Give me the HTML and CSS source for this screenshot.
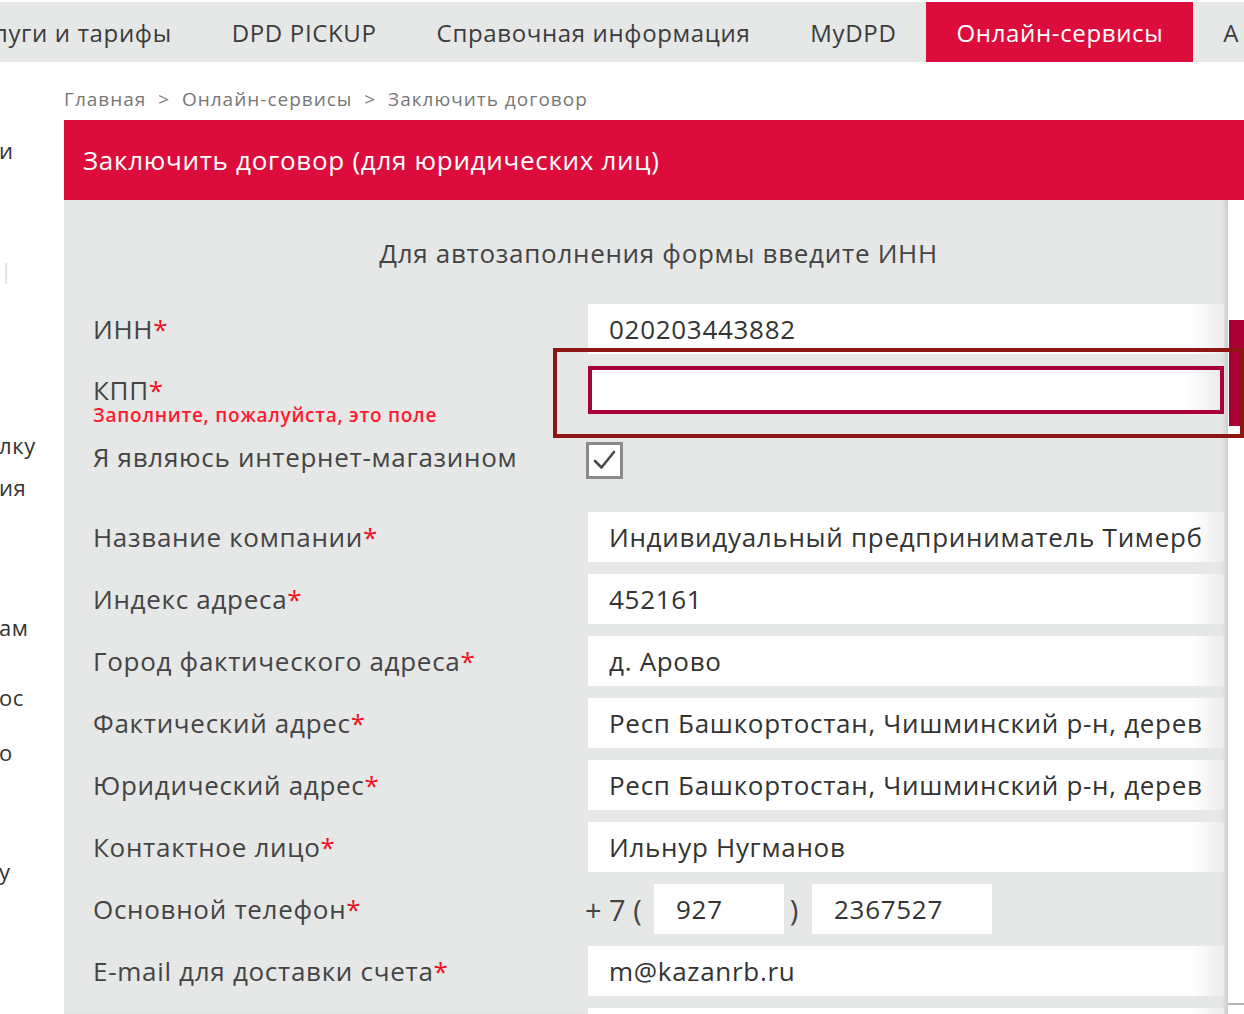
FILE: index.html
```html
<!DOCTYPE html>
<html lang="ru">
<head>
<meta charset="utf-8">
<title>Заключить договор</title>
<link rel="stylesheet" href="styles.css">
</head>
<body>
<nav class="topnav">
  <div class="navlist">
    <a class="navitem first" href="#">луги и тарифы</a>
    <a class="navitem" href="#">DPD PICKUP</a>
    <a class="navitem" href="#">Справочная информация</a>
    <a class="navitem" href="#">MyDPD</a>
    <a class="navitem active" href="#">Онлайн-сервисы</a>
    <a class="navitem" href="#">А</a>
  </div>
</nav>
<div class="main">
  <aside class="sidebar">
    <span class="side-item">и</span>
    <span class="side-item faint">|</span>
    <span class="side-item">лку</span>
    <span class="side-item">ия</span>
    <span class="side-item">ам</span>
    <span class="side-item">ос</span>
    <span class="side-item">о</span>
    <span class="side-item">у</span>
  </aside>
  <section class="content">
    <div class="breadcrumb">Главная&nbsp; &gt; &nbsp;Онлайн-сервисы&nbsp; &gt; &nbsp;Заключить договор</div>
    <h1 class="title">Заключить договор (для юридических лиц)</h1>
    <div class="panel">
      <p class="hint">Для автозаполнения формы введите ИНН</p>
      <div class="form">
        <div class="label">ИНН<span class="req">*</span></div>
        <div class="field"><div class="input"><span class="val">020203443882</span></div></div>

        <div class="label label-err"><div class="lbl-line">КПП<span class="req">*</span></div><div class="err">Заполните, пожалуйста, это поле</div></div>
        <div class="field"><div class="input invalid"><span class="val"></span></div></div>

        <div class="label label-top">Я являюсь интернет-магазином</div>
        <div class="field field-top">
          <div class="checkbox">
            <svg width="31" height="31" viewBox="0 0 31 31"><path d="M6 16 L12.5 22.5 L25 7" fill="none" stroke="#4a4a4a" stroke-width="2.6" stroke-linecap="round" stroke-linejoin="round"/></svg>
          </div>
        </div>

        <div class="label">Название компании<span class="req">*</span></div>
        <div class="field"><div class="input"><span class="val">Индивидуальный предприниматель Тимербулатов</span></div></div>

        <div class="label">Индекс адреса<span class="req">*</span></div>
        <div class="field"><div class="input"><span class="val">452161</span></div></div>

        <div class="label">Город фактического адреса<span class="req">*</span></div>
        <div class="field"><div class="input"><span class="val">д. Арово</span></div></div>

        <div class="label">Фактический адрес<span class="req">*</span></div>
        <div class="field"><div class="input"><span class="val">Респ Башкортостан, Чишминский р-н, деревня Арово</span></div></div>

        <div class="label">Юридический адрес<span class="req">*</span></div>
        <div class="field"><div class="input"><span class="val">Респ Башкортостан, Чишминский р-н, деревня Арово</span></div></div>

        <div class="label">Контактное лицо<span class="req">*</span></div>
        <div class="field"><div class="input"><span class="val">Ильнур Нугманов</span></div></div>

        <div class="label">Основной телефон<span class="req">*</span></div>
        <div class="field phone">
          <span class="prefix">+ 7 (</span>
          <div class="input code"><span class="val">927</span></div>
          <span class="paren">)</span>
          <div class="input number"><span class="val">2367527</span></div>
        </div>

        <div class="label">E-mail для доставки счета<span class="req">*</span></div>
        <div class="field"><div class="input"><span class="val">m@kazanrb.ru</span></div></div>

        <div class="label"></div>
        <div class="field"><div class="input"><span class="val"></span></div></div>
      </div>
    </div>
  </section>
</div>
<div class="side-tab"></div>
<div class="edge-line"></div>
<div class="annotation"></div>
</body>
</html>
```
FILE: styles.css
```css
html, body {
  margin: 0;
  padding: 0;
}
body {
  width: 1244px;
  height: 1014px;
  overflow: hidden;
  position: relative;
  background: #fff;
  font-family: "Open Sans", "Noto Sans", sans-serif;
  color: #444;
}

/* top navigation */
.topnav {
  margin-top: 2px;
  height: 60px;
  background: #e6e7e7;
  overflow: hidden;
}
.navlist {
  display: flex;
  height: 100%;
  margin-left: -6px;
  white-space: nowrap;
}
.navitem {
  display: flex;
  align-items: center;
  padding: 0 30px;
  font-size: 24px;
  letter-spacing: 0.65px;
  color: #3c3c3c;
  text-decoration: none;
}
.navitem.first {
  padding-left: 0;
}
.navitem.active {
  background: #dc0d3c;
  color: #fff;
}

/* main */
.main {
  display: flex;
}
.sidebar {
  width: 64px;
  flex: none;
  display: flex;
  flex-direction: column;
  font-size: 22px;
  letter-spacing: 0.6px;
  color: #333;
  overflow: hidden;
}
.side-item {
  display: block;
  height: 30px;
  line-height: 30px;
  margin-left: -1px;
}
.side-item:nth-child(1) { margin-top: 73px; }
.side-item:nth-child(2) { margin-top: 90px; }
.side-item:nth-child(3) { margin-top: 145px; }
.side-item:nth-child(4) { margin-top: 12px; }
.side-item:nth-child(5) { margin-top: 110px; }
.side-item:nth-child(6) { margin-top: 40px; }
.side-item:nth-child(7) { margin-top: 25px; }
.side-item:nth-child(8) { margin-top: 89px; }
.side-item.faint {
  color: #ddd;
  margin-left: 0;
}

.content {
  width: 1180px;
  flex: none;
}
.breadcrumb {
  height: 58px;
  box-sizing: border-box;
  padding-top: 26px;
  line-height: 22px;
  font-size: 19px;
  letter-spacing: 1px;
  color: #777;
  white-space: nowrap;
}
.title {
  margin: 0;
  height: 80px;
  background: #dc0d3c;
  color: #fff;
  font-weight: 400;
  font-size: 26px;
  letter-spacing: 0.7px;
  padding-left: 19px;
  display: flex;
  align-items: center;
}

.panel {
  width: 1164px;
  height: 814px;
  box-sizing: border-box;
  background: #e6e7e7;
  padding: 0 4px 0 29px;
  box-shadow: inset -6px 0 5px -3px rgba(0, 0, 0, 0.12);
}
.hint {
  margin: 0;
  height: 104px;
  box-sizing: border-box;
  padding-top: 38px;
  line-height: 30px;
  font-size: 26px;
  letter-spacing: 0.7px;
  text-align: center;
  color: #444;
}

.form {
  display: grid;
  grid-template-columns: 495px 636px;
  row-gap: 12px;
}
.label {
  height: 50px;
  display: flex;
  align-items: center;
  font-size: 26px;
  letter-spacing: 0.7px;
  color: #444;
  white-space: nowrap;
}
.req {
  color: #f0101e;
}
.label-err {
  flex-direction: column;
  align-items: flex-start;
  justify-content: flex-start;
  padding-top: 10px;
  box-sizing: border-box;
}
.lbl-line {
  line-height: 28px;
  height: 28px;
}
.err {
  font-size: 19px;
  line-height: 22px;
  letter-spacing: 0.75px;
  font-weight: 600;
  color: #ff1a2e;
}
.label-top {
  height: 72px;
  align-items: flex-start;
  padding-top: 14px;
  box-sizing: border-box;
  line-height: 30px;
}

.field {
  height: 50px;
}
.field-top {
  height: 72px;
}
.input {
  height: 50px;
  box-sizing: border-box;
  padding: 0 21px;
  line-height: 50px;
  font-size: 26px;
  letter-spacing: 0.7px;
  color: #333;
  white-space: nowrap;
  background: linear-gradient(to right, #fff calc(100% - 32px), #ececec);
}
.val {
  display: block;
  overflow: hidden;
  white-space: nowrap;
}
.input.invalid {
  border: 4px solid #a60036;
  padding-left: 17px;
  line-height: 42px;
  height: 48px;
}
.checkbox {
  margin-top: 14px;
  margin-left: -2px;
  width: 37px;
  height: 37px;
  box-sizing: border-box;
  border: 3px solid #8a8a8a;
  background: #fff;
}
.checkbox svg {
  display: block;
}

.phone {
  display: flex;
  align-items: center;
}
.prefix {
  margin-left: -3px;
  width: 69px;
  font-size: 29px;
  color: #444;
  white-space: nowrap;
}
.input.code {
  width: 130px;
  padding-left: 22px;
  background: #fff;
}
.paren {
  width: 28px;
  text-align: center;
  font-size: 29px;
  color: #444;
  margin-left: -4px;
  margin-right: 4px;
}
.input.number {
  width: 180px;
  padding-left: 22px;
  background: #fff;
}

/* overlays at the right edge */
.side-tab {
  position: absolute;
  left: 1229px;
  top: 320px;
  width: 15px;
  height: 112px;
  background: #a60036;
  border-bottom: 6px solid #fff;
  box-sizing: border-box;
}
.edge-line {
  position: absolute;
  left: 1228px;
  top: 1003px;
  width: 16px;
  height: 2px;
  background: #b5b5b5;
}
.annotation {
  position: absolute;
  left: 553px;
  top: 348px;
  width: 691px;
  height: 90px;
  box-sizing: border-box;
  border: 4px solid #8f1414;
}
```
